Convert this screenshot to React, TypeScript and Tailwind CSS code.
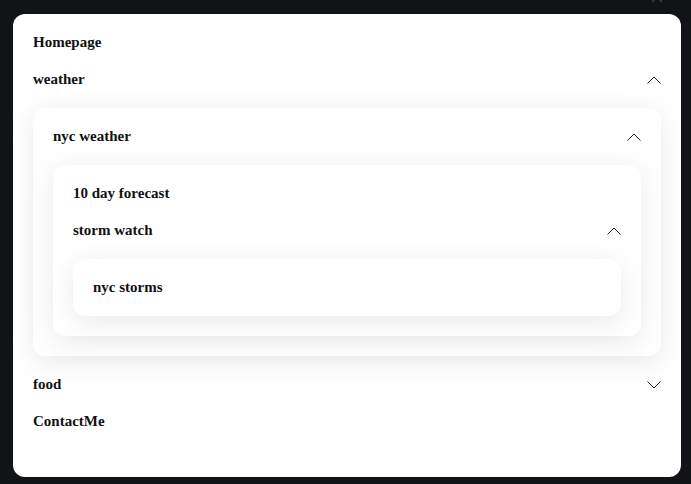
import { ReactNode } from "react";

function Chevron({ up }: { up?: boolean }) {
  return (
    <svg width="14" height="8" viewBox="0 0 14 8" fill="none" className="shrink-0">
      {up ? (
        <polyline points="0.5,7.5 7,1 13.5,7.5" stroke="#222" strokeWidth="1" />
      ) : (
        <polyline points="0.5,0.5 7,7 13.5,0.5" stroke="#222" strokeWidth="1" />
      )}
    </svg>
  );
}

function Row({ label, open }: { label: string; open?: boolean }) {
  return (
    <div className="flex items-center justify-between h-[17px]">
      <span className="font-bold text-[15px] leading-[17px] text-[#111]">{label}</span>
      {open !== undefined && <Chevron up={open} />}
    </div>
  );
}

function Panel({ children }: { children: ReactNode }) {
  return (
    <div className="flex flex-col gap-5 p-5 rounded-xl bg-white shadow-[0_6px_28px_rgba(0,0,0,0.09)]">
      {children}
    </div>
  );
}

export default function App() {
  return (
    <div
      className="relative w-[691px] h-[484px] bg-[#111317] overflow-hidden pt-[14px] pl-[13px] pr-[10px]"
      style={{ fontFamily: '"Liberation Serif", "Times New Roman", serif' }}
    >
      {/* close icon, mostly scrolled off the top */}
      <svg width="12" height="12" viewBox="0 0 12 12" className="absolute left-[651px] top-[-9px]">
        <path d="M1 1L11 11M11 1L1 11" stroke="#3a3c40" strokeWidth="1.5" />
      </svg>
      <div className="flex flex-col gap-5 h-[463px] rounded-xl bg-white px-5 pt-5">
        <Row label="Homepage" />
        <Row label="weather" open />
        <Panel>
          <Row label="nyc weather" open />
          <Panel>
            <Row label="10 day forecast" />
            <Row label="storm watch" open />
            <Panel>
              <Row label="nyc storms" />
            </Panel>
          </Panel>
        </Panel>
        <Row label="food" open={false} />
        <Row label="ContactMe" />
      </div>
    </div>
  );
}
